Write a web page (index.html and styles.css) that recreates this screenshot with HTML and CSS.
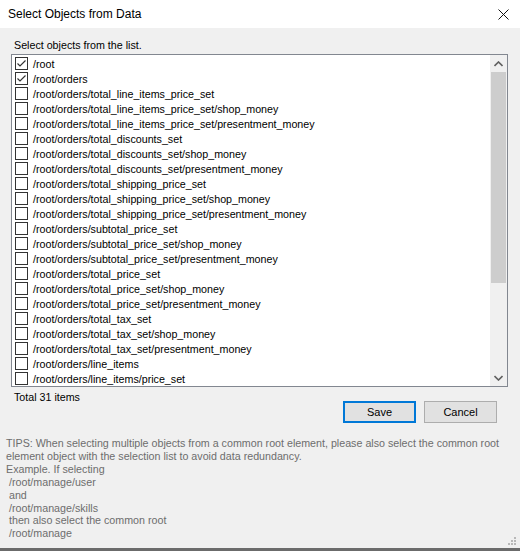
FILE: index.html
```html
<!DOCTYPE html>
<html lang="en">
<head>
    <meta charset="UTF-8">
    <title>Select Objects from Data</title>
    <link rel="stylesheet" href="styles.css">
</head>
<body>

    <div class="dialog">
        <div class="titlebar">
            <span>Select Objects from Data</span>
            <svg class="close" width="11" height="11" viewBox="0 0 11 11">
                <path d="M0.5 0.5 L10.5 10.5 M10.5 0.5 L0.5 10.5" stroke="#111" stroke-width="1" fill="none"/>
            </svg>
        </div>

        <div class="content">
            <div class="prompt">Select objects from the list.</div>

            <div class="listbox">
                <div class="items" id="items"></div>
                <div class="scrollbar">
                    <div class="arrow">
                        <svg width="9" height="6" viewBox="0 0 9 6"><path d="M0.5 5 L4.5 1 L8.5 5" stroke="#606060" stroke-width="1.6" fill="none"/></svg>
                    </div>
                    <div class="thumb"></div>
                    <div class="track"></div>
                    <div class="arrow">
                        <svg width="9" height="6" viewBox="0 0 9 6"><path d="M0.5 1 L4.5 5 L8.5 1" stroke="#606060" stroke-width="1.6" fill="none"/></svg>
                    </div>
                </div>
            </div>

            <div class="footer">
                <div class="total">Total 31 items</div>
                <div class="buttons">
                    <button class="btn default">Save</button>
                    <button class="btn">Cancel</button>
                </div>
            </div>
        </div>

        <div class="tips">TIPS: When selecting multiple objects from a common root element, please also select the common root
element object with the selection list to avoid data redundancy.
Example. If selecting
 /root/manage/user
 and
 /root/manage/skills
 then also select the common root
 /root/manage</div>

        <svg class="grip" width="10" height="10" viewBox="0 0 10 10">
            <rect x="7" y="1" width="2" height="2" fill="#b8b8b8"/>
            <rect x="4" y="4" width="2" height="2" fill="#b8b8b8"/>
            <rect x="7" y="4" width="2" height="2" fill="#b8b8b8"/>
            <rect x="1" y="7" width="2" height="2" fill="#b8b8b8"/>
            <rect x="4" y="7" width="2" height="2" fill="#b8b8b8"/>
            <rect x="7" y="7" width="2" height="2" fill="#b8b8b8"/>
        </svg>
    </div>

    <script>
        // rows that fit in the list box without scrolling
        const paths = [
            '/root',
            '/root/orders',
            '/root/orders/total_line_items_price_set',
            '/root/orders/total_line_items_price_set/shop_money',
            '/root/orders/total_line_items_price_set/presentment_money',
            '/root/orders/total_discounts_set',
            '/root/orders/total_discounts_set/shop_money',
            '/root/orders/total_discounts_set/presentment_money',
            '/root/orders/total_shipping_price_set',
            '/root/orders/total_shipping_price_set/shop_money',
            '/root/orders/total_shipping_price_set/presentment_money',
            '/root/orders/subtotal_price_set',
            '/root/orders/subtotal_price_set/shop_money',
            '/root/orders/subtotal_price_set/presentment_money',
            '/root/orders/total_price_set',
            '/root/orders/total_price_set/shop_money',
            '/root/orders/total_price_set/presentment_money',
            '/root/orders/total_tax_set',
            '/root/orders/total_tax_set/shop_money',
            '/root/orders/total_tax_set/presentment_money',
            '/root/orders/line_items',
            '/root/orders/line_items/price_set'
        ];
        const checked = ['/root', '/root/orders'];

        const list = document.getElementById('items');
        paths.forEach(p => {
            const row = document.createElement('div');
            row.className = 'row';
            const box = document.createElement('span');
            box.className = 'box';
            if (checked.includes(p)) {
                box.innerHTML = '<svg width="11" height="11" viewBox="0 0 11 11"><path d="M1.5 5.5 L4 8 L9.5 2.5" stroke="#333" stroke-width="1.2" fill="none"/></svg>';
            }
            const label = document.createElement('span');
            label.textContent = p;
            row.appendChild(box);
            row.appendChild(label);
            list.appendChild(row);
        });
    </script>
</body>
</html>
```

FILE: styles.css
```css
body {
    margin: 0;
    font-family: "Liberation Sans", Arial, sans-serif;
    font-size: 10.7px;
    color: #000;
}
.dialog {
    position: relative;
    width: 520px;
    height: 551px;
    box-sizing: border-box;
    background-color: #f0f0f0;
    border-bottom: 3px solid #6b6b6b;
    display: flex;
    flex-direction: column;
}
.titlebar {
    height: 28px;
    background-color: #fff;
    display: flex;
    align-items: center;
    justify-content: space-between;
    padding: 0 11px 0 8px;
    font-size: 12px;
}
.content {
    padding: 0 12px 0 11px;
}
.prompt {
    margin-top: 11px;
    height: 15px;
    line-height: 13px;
    padding-left: 3px;
}
.listbox {
    height: 333px;
    box-sizing: border-box;
    border: 1px solid #828790;
    background-color: #fff;
    display: flex;
}
.items {
    flex: 1;
    padding-top: 1px;
    overflow: hidden;
}
.row {
    height: 15px;
    display: flex;
    align-items: center;
    padding-left: 3px;
    white-space: nowrap;
}
.box {
    width: 13px;
    height: 13px;
    box-sizing: border-box;
    border: 1px solid #333;
    margin-right: 5px;
    flex: none;
    display: flex;
    align-items: center;
    justify-content: center;
}
.scrollbar {
    width: 17px;
    display: flex;
    flex-direction: column;
    background-color: #f0f0f0;
}
.arrow {
    height: 17px;
    display: flex;
    align-items: center;
    justify-content: center;
}
.thumb {
    height: 211px;
    margin: 0 1px;
    background-color: #cdcdcd;
}
.track {
    flex: 1;
}
.footer {
    display: flex;
    justify-content: space-between;
}
.total {
    margin-top: 4px;
    padding-left: 3px;
    line-height: 13px;
}
.buttons {
    display: flex;
    gap: 8px;
    margin-top: 14px;
    margin-right: 11px;
}
.btn {
    width: 73px;
    height: 22px;
    box-sizing: border-box;
    background-color: #e1e1e1;
    border: 1px solid #adadad;
    font-family: "Liberation Sans", Arial, sans-serif;
    font-size: 11px;
    color: #000;
    padding: 0;
}
.btn.default {
    border: 2px solid #0078d7;
}
.tips {
    margin-top: 14px;
    padding-left: 6px;
    white-space: pre;
    font-size: 10.7px;
    line-height: 12.9px;
    color: #6d6d6d;
}
.grip {
    position: absolute;
    right: 3px;
    bottom: 2px;
}
```
